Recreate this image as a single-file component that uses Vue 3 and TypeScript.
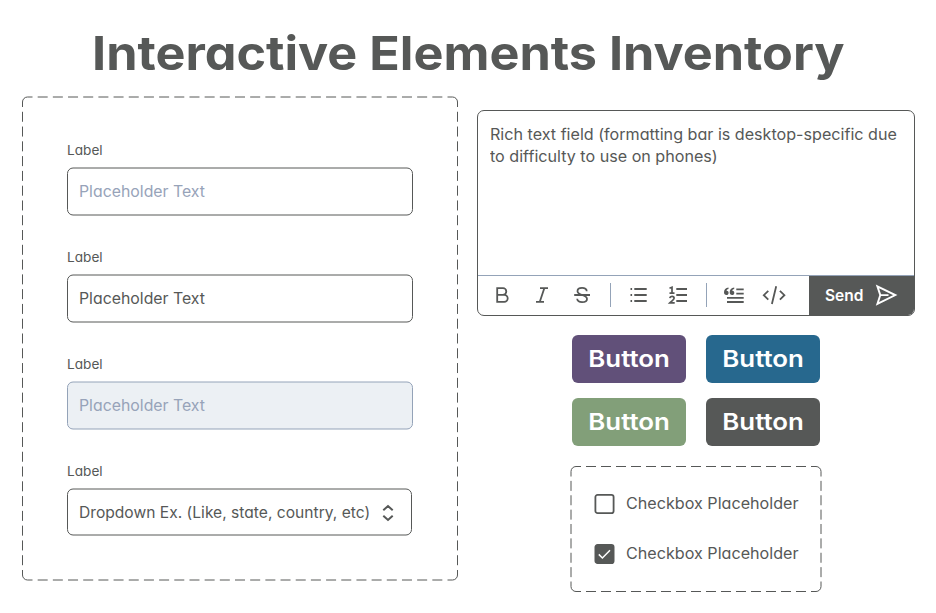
<script setup lang="ts">
interface Field {
  text: string
  kind: 'placeholder' | 'filled' | 'disabled'
}

interface Dash {
  d: string
  dash: string
}

const fields: Field[] = [
  { text: 'Placeholder Text', kind: 'placeholder' },
  { text: 'Placeholder Text', kind: 'filled' },
  { text: 'Placeholder Text', kind: 'disabled' },
]

const buttons: string[] = ['purple', 'blue', 'green', 'dark']

const checks = [{ checked: false }, { checked: true }]

// Each straight side carries evenly spread dashes; the corners stay solid.
function sides(x: number, y: number, w: number, h: number, nx: number, ny: number): Dash[] {
  const r = 5
  const gx = ((w - 2 * r) / nx - 10).toFixed(3)
  const gy = ((h - 2 * r) / ny - 10).toFixed(3)
  return [
    { d: `M${x + r} ${y}h${w - 2 * r}`, dash: `10 ${gx}` },
    { d: `M${x + r} ${y + h}h${w - 2 * r}`, dash: `10 ${gx}` },
    { d: `M${x} ${y + r}v${h - 2 * r}`, dash: `10 ${gy}` },
    { d: `M${x + w} ${y + r}v${h - 2 * r}`, dash: `10 ${gy}` },
  ]
}

function corners(x: number, y: number, w: number, h: number): string {
  const r = 5
  return (
    `M${x} ${y + r}a${r} ${r} 0 0 1 ${r} ${-r}` +
    `M${x + w - r} ${y}a${r} ${r} 0 0 1 ${r} ${r}` +
    `M${x + w} ${y + h - r}a${r} ${r} 0 0 1 ${-r} ${r}` +
    `M${x + r} ${y + h}a${r} ${r} 0 0 1 ${-r} ${-r}`
  )
}

const formSides = sides(0.5, 1, 435, 483, 28, 32)
const formCorners = corners(0.5, 1, 435, 483)
const checkSides = sides(1, 0.5, 250, 125, 16, 8)
const checkCorners = corners(1, 0.5, 250, 125)
</script>

<template>
  <main class="page">
    <h1 class="title">Interactive Elements Inventory</h1>
    <div class="columns">
      <section class="form">
        <svg class="frame" width="436" height="485" viewBox="0 0 436 485">
          <path v-for="s in formSides" :key="s.d" :d="s.d" :stroke-dasharray="s.dash" stroke-dashoffset="5" />
          <path :d="formCorners" />
        </svg>
        <div v-for="(f, i) in fields" :key="i" class="field">
          <span class="label">Label</span>
          <div class="input" :class="f.kind">
            <svg class="frame" width="346" height="49" viewBox="0 0 346 49">
              <rect x="0.5" y="1" width="345" height="47" rx="5.5" />
            </svg>
            <span class="value">{{ f.text }}</span>
          </div>
        </div>
        <div class="field">
          <span class="label">Label</span>
          <div class="input select">
            <svg class="frame" width="346" height="49" viewBox="0 0 346 49">
              <rect x="0.5" y="1" width="344" height="46" rx="5.5" />
            </svg>
            <span class="value">Dropdown Ex. (Like, state, country, etc)</span>
            <svg class="chevrons" width="12" height="18" viewBox="0 0 12 18">
              <path d="M1.3 6.3 6 2l4.7 4.3M1.3 11.7 6 16l4.7-4.3" />
            </svg>
          </div>
        </div>
      </section>

      <div class="right">
        <section class="editor">
          <p class="rich">Rich text field (formatting bar is desktop-specific due<br />to difficulty to use on phones)</p>
          <div class="toolbar">
            <div class="tools">
              <svg class="icon" viewBox="0 0 24 24"><path d="M7.2 5.2h5.8a3.3 3.3 0 0 1 0 6.6H7.2zM7.2 11.8h7a3.5 3.5 0 0 1 0 7H7.2z" /></svg>
              <svg class="icon" viewBox="0 0 24 24"><path d="M10 5.2h8M6 18.8h8M14.3 5.2l-4.5 13.6" /></svg>
              <svg class="icon" viewBox="0 0 24 24"><path d="M4.2 12h15.8M16.7 8.2c0-2-1.8-3.3-4.6-3.3-2.7 0-4.6 1.3-4.6 3.3 0 2.1 2 2.9 4.6 3.8 3 1 4.9 1.8 4.9 3.9s-2 3.2-4.9 3.2c-2.9 0-4.9-1.2-4.9-3.3" /></svg>
              <i class="sep"></i>
              <svg class="icon" viewBox="0 0 24 24"><path d="M8.3 6h12.4M8.3 12h12.4M8.3 18h12.4M4.5 6h1.6M4.5 12h1.6M4.5 18h1.6" /></svg>
              <svg class="icon" viewBox="0 0 24 24"><path d="M10.3 6H21M10.3 12H21M10.3 18H21" /><path class="num" d="M3.5 5.3 6 4.3v6.2M3.5 10.2h5M3.8 15.2c.3-2.4 4.3-2.3 4.3 0 0 1.6-2.3 2.6-4.3 4.6h4.9" /></svg>
              <i class="sep"></i>
              <svg class="icon" viewBox="0 0 24 24"><path d="M14.3 6.4h7.4M14.3 10.7h7.4M5 14.8h16.7M5 19h16.7" /><path class="solid" d="M6.5 4.6C3.6 4.9 2 6.7 2 9.3c0 1.7.9 2.7 2.4 2.7 1.3 0 2.2-.9 2.2-2.1 0-1.3-.8-2-2-2.1.1-.9.8-1.5 1.9-1.7zM12.2 4.6c-2.9.3-4.5 2.1-4.5 4.7 0 1.7.9 2.7 2.4 2.7 1.3 0 2.2-.9 2.2-2.1 0-1.3-.8-2-2-2.1.1-.9.8-1.5 1.9-1.7z" /></svg>
              <svg class="icon" viewBox="0 0 24 24"><path d="M6.3 7.8 1.8 12.2l4.5 4.4M17.9 7.8l4.5 4.4-4.5 4.4M14.2 3.3 9.9 21" /></svg>
            </div>
            <div class="send">
              <span class="send-text">Send</span>
              <svg class="icon" viewBox="0 0 24 24"><path d="M3.4 3.4 21.3 12.1 3.4 20.9 6.3 12.1zM6.3 12.1h8.2" /></svg>
            </div>
          </div>
        </section>

        <div class="buttons">
          <div v-for="b in buttons" :key="b" class="button" :class="b"><span class="button-text">Button</span></div>
        </div>

        <section class="checks">
          <svg class="frame" width="252" height="126" viewBox="0 0 252 126">
            <path v-for="s in checkSides" :key="s.d" :d="s.d" :stroke-dasharray="s.dash" stroke-dashoffset="5" />
            <path :d="checkCorners" />
          </svg>
          <div v-for="(c, i) in checks" :key="i" class="check">
            <svg class="box" width="21" height="20" viewBox="0 0 21 20">
              <rect x="1.4" y="0.9" width="18.2" height="18.2" rx="2.2" :class="{ on: c.checked }" />
              <path v-if="c.checked" d="m4.8 10.4 3.6 3.6 7.6-7.8" />
            </svg>
            <span class="check-text">Checkbox Placeholder</span>
          </div>
        </section>
      </div>
    </div>
  </main>
</template>

<style>
body {
  margin: 0;
  background: #fff;
}
</style>

<style scoped>
.page {
  box-sizing: border-box;
  width: 936px;
  height: 613px;
  overflow: hidden;
  padding: 23px 21px 0 22px;
  font-family: Inter, "Liberation Sans", sans-serif;
  font-feature-settings: "cv11", "calt" 0;
  color: #565857;
  white-space: nowrap;
}
.title {
  margin: 0 0 0 70px;
  height: 73px;
  line-height: 60px;
  font-size: 47px;
  font-weight: 700;
  transform: scaleX(1.071);
  transform-origin: 0 0;
}
.columns {
  display: flex;
  align-items: flex-start;
  gap: 19px;
}
.frame {
  position: absolute;
  left: 0;
  top: 0;
  fill: none;
  stroke: #565857;
  stroke-width: 1;
}
.form {
  position: relative;
  box-sizing: border-box;
  width: 436px;
  height: 485px;
  padding: 44px 45px 0;
}
.field {
  height: 107px;
}
.label {
  display: block;
  height: 27px;
  line-height: 21px;
  font-size: 13.5px;
  transform: scaleX(1.01);
  transform-origin: 0 0;
}
.input {
  position: relative;
  display: flex;
  align-items: center;
  box-sizing: border-box;
  height: 49px;
  padding: 0 12px;
  font-size: 15.5px;
}
.value {
  transform: scaleX(1.022);
  transform-origin: 0 0;
}
.placeholder .value,
.disabled .value {
  color: #97a3b9;
}
.disabled .frame {
  fill: #ecf0f4;
  stroke: #94a3b8;
}
.select {
  justify-content: space-between;
  padding-right: 19px;
}
.select .value {
  transform: scaleX(1.007);
}
.chevrons {
  position: relative;
  fill: none;
  stroke: #565857;
  stroke-width: 2;
}
.right {
  display: flex;
  flex-direction: column;
  align-items: center;
  width: 438px;
  padding-top: 14px;
}
.editor {
  display: flex;
  flex-direction: column;
  box-sizing: border-box;
  width: 438px;
  height: 206px;
  border: 1px solid #565857;
  border-radius: 7px;
  overflow: hidden;
}
.rich {
  flex: 1;
  align-self: flex-start;
  margin: 13px 0 0 12px;
  line-height: 22px;
  font-size: 15.5px;
  transform: scaleX(1.04);
  transform-origin: 0 0;
}
.toolbar {
  display: flex;
  height: 39px;
  border-top: 1px solid #94a3b8;
}
.tools {
  display: flex;
  flex: 1;
  align-items: center;
  gap: 16px;
  padding: 0 0 1px 12px;
}
.icon {
  flex: none;
  width: 24px;
  height: 24px;
  fill: none;
  stroke: #565857;
  stroke-width: 1.8;
}
.icon .num {
  stroke-width: 1.7;
}
.icon .solid {
  fill: #565857;
  stroke: none;
}
.sep {
  width: 1px;
  height: 24px;
  margin-right: -1px;
  background: #94a3b8;
}
.send {
  display: flex;
  align-items: center;
  justify-content: space-between;
  box-sizing: border-box;
  width: 105px;
  padding: 0 16px 1px;
  background: #565857;
  color: #fff;
  font-size: 16px;
  font-weight: 600;
}
.send-text {
  font-feature-settings: normal;
  transform: scaleX(0.97);
  transform-origin: 0 0;
}
.send .icon {
  stroke: #fff;
  stroke-width: 1.9;
}
.buttons {
  display: grid;
  grid-template-columns: 114px 114px;
  gap: 15px 20px;
  margin-top: 19px;
}
.button {
  display: flex;
  align-items: center;
  justify-content: center;
  box-sizing: border-box;
  height: 48px;
  padding-bottom: 2px;
  border-radius: 6px;
  color: #fff;
  font-size: 23.5px;
  font-weight: 600;
}
.button-text {
  transform: scaleX(1.1);
}
.purple {
  background: #615079;
}
.blue {
  background: #27688e;
}
.green {
  background: #829f79;
}
.dark {
  background: #565857;
}
.checks {
  position: relative;
  display: flex;
  flex-direction: column;
  gap: 30px;
  box-sizing: border-box;
  width: 252px;
  height: 126px;
  margin-top: 20px;
  padding: 28px 24px 0;
}
.check {
  display: flex;
  align-items: center;
  gap: 11px;
  height: 20px;
  font-size: 15.5px;
}
.check-text {
  padding-bottom: 2px;
  transform: scaleX(1.041);
  transform-origin: 0 0;
}
.box {
  flex: none;
  fill: none;
  stroke: #565857;
  stroke-width: 1.8;
}
.box .on {
  fill: #565857;
}
.box path {
  stroke: #fff;
  stroke-width: 1.5;
}
</style>
